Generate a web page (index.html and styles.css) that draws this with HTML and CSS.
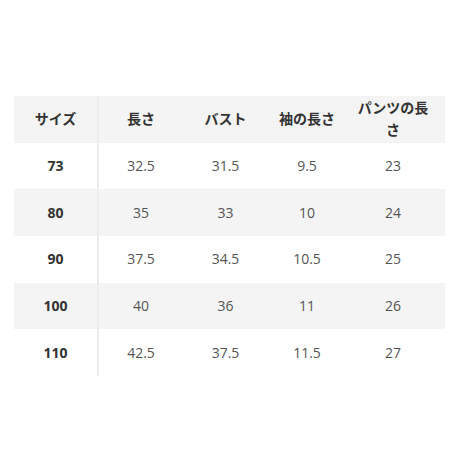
FILE: index.html
```html
<!DOCTYPE html>
<html lang="ja">
<head>
<meta charset="utf-8">
<link rel="stylesheet" href="styles.css">
</head>
<body>
<table class="size-table">
  <colgroup>
    <col class="c1"><col class="c2"><col class="c3"><col class="c4"><col class="c5">
  </colgroup>
  <thead>
    <tr class="shade">
      <th class="first">サイズ</th>
      <th>長さ</th>
      <th>バスト</th>
      <th>袖の長さ</th>
      <th class="last">パンツの長さ</th>
    </tr>
  </thead>
  <tbody>
    <tr><th class="first">73</th><td>32.5</td><td>31.5</td><td>9.5</td><td class="last">23</td></tr>
    <tr class="shade"><th class="first">80</th><td>35</td><td>33</td><td>10</td><td class="last">24</td></tr>
    <tr><th class="first">90</th><td>37.5</td><td>34.5</td><td>10.5</td><td class="last">25</td></tr>
    <tr class="shade"><th class="first">100</th><td>40</td><td>36</td><td>11</td><td class="last">26</td></tr>
    <tr><th class="first">110</th><td>42.5</td><td>37.5</td><td>11.5</td><td class="last">27</td></tr>
  </tbody>
</table>
</body>
</html>
```
FILE: styles.css
```css
html, body {
  margin: 0;
  padding: 0;
  background: #ffffff;
}
body {
  font-family: "Open Sans", "Noto Sans CJK JP", sans-serif;
  font-size: 14px;
  color: #555555;
}
.size-table {
  margin: 96px 0 0 14px;
  border-collapse: collapse;
  table-layout: fixed;
  width: 431px;
}
.c1 { width: 84px; }
.c2 { width: 85px; }
.c3 { width: 85px; }
.c4 { width: 78px; }
.c5 { width: 99px; }
.size-table th,
.size-table td {
  height: 46.67px;
  padding: 0 4px;
  text-align: center;
  vertical-align: middle;
  line-height: 22px;
  box-sizing: border-box;
}
.size-table th {
  font-weight: 700;
  color: #333333;
}
.size-table td {
  font-weight: 400;
  color: #555555;
}
.size-table .first {
  border-right: 2px solid #ececec;
}
.size-table .last {
  padding: 0 15px 0 10px;
}
.shade th,
.shade td {
  background: #f4f4f4;
}
```
